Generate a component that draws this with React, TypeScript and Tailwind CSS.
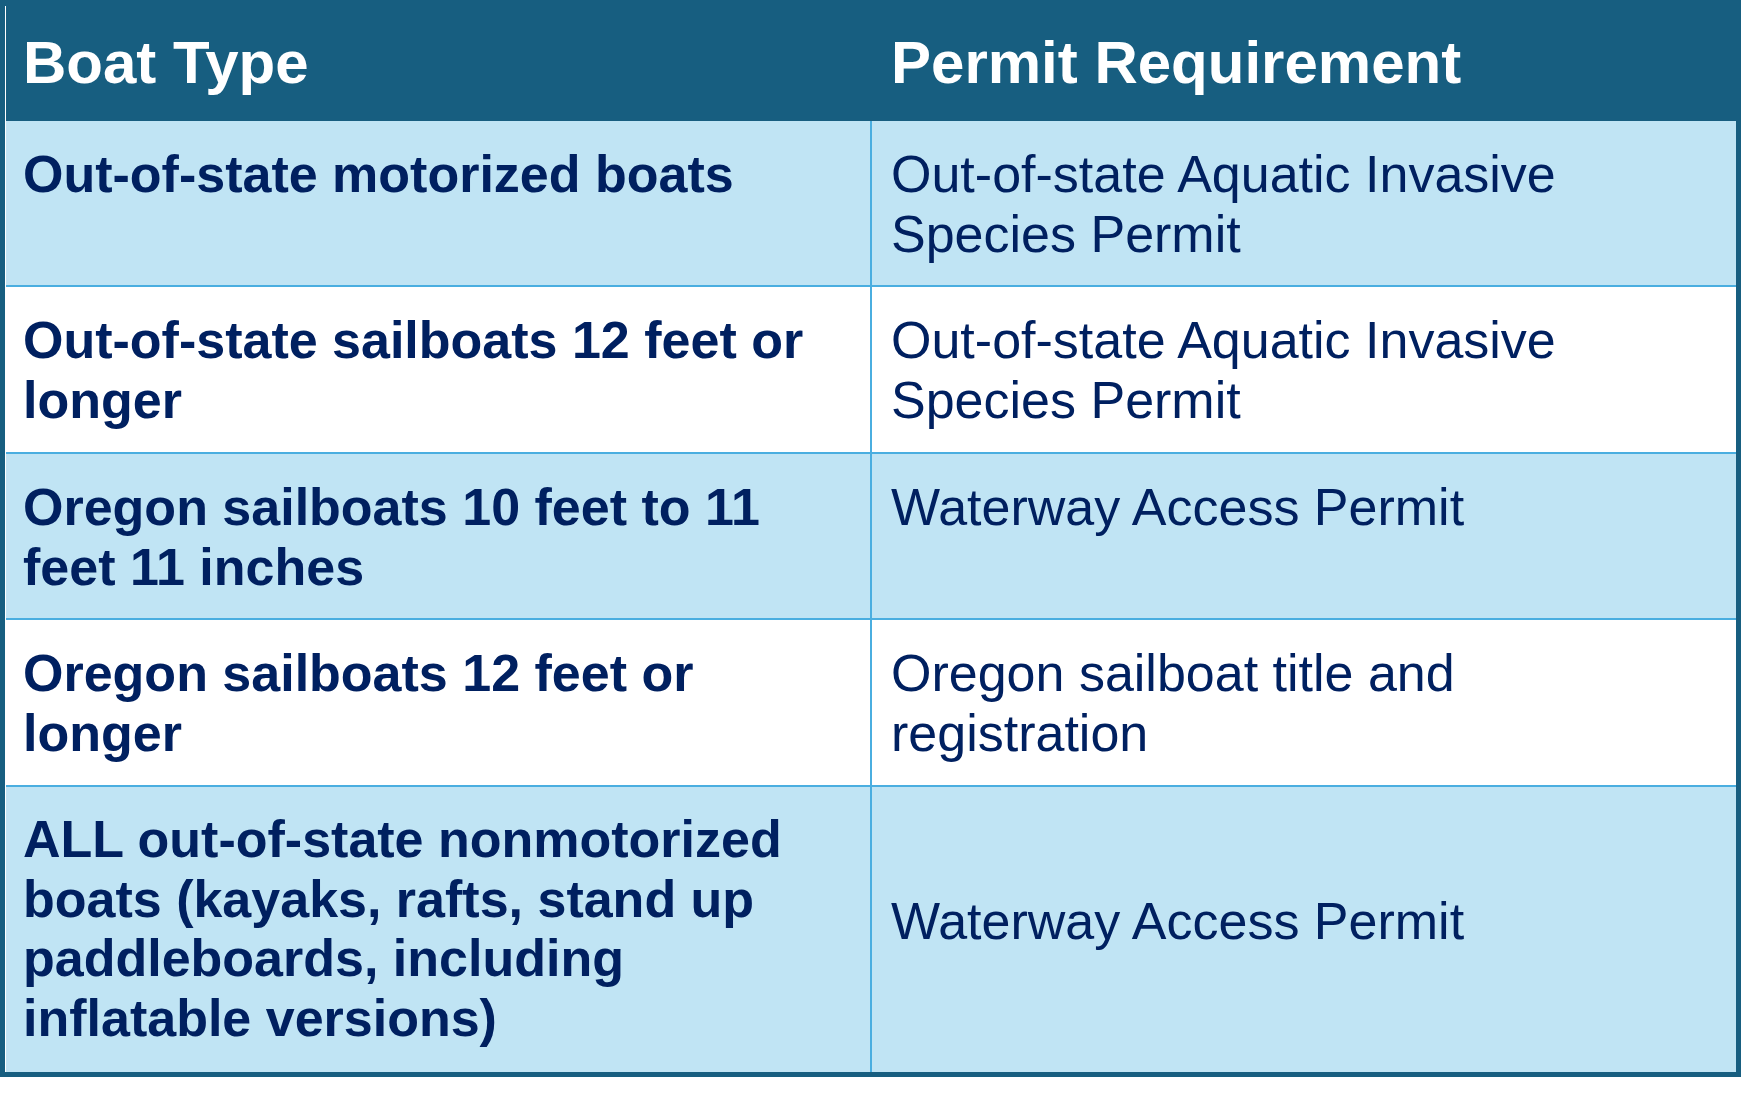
import React from 'react';

interface Row {
  boat: string[];
  permit: string[];
  tint: boolean;
  height: string;
}

const rows: Row[] = [
  { boat: ['Out-of-state motorized boats'], permit: ['Out-of-state Aquatic Invasive', 'Species Permit'], tint: true, height: 'h-[164px]' },
  { boat: ['Out-of-state sailboats 12 feet or', 'longer'], permit: ['Out-of-state Aquatic Invasive', 'Species Permit'], tint: false, height: 'h-[167px]' },
  { boat: ['Oregon sailboats 10 feet to 11', 'feet 11 inches'], permit: ['Waterway Access Permit'], tint: true, height: 'h-[166px]' },
  { boat: ['Oregon sailboats 12 feet or', 'longer'], permit: ['Oregon sailboat title and', 'registration'], tint: false, height: 'h-[167px]' },
];

const lastRow: Row = {
  boat: ['ALL out-of-state nonmotorized', 'boats (kayaks, rafts, stand up', 'paddleboards, including', 'inflatable versions)'],
  permit: ['Waterway Access Permit'],
  tint: true,
  height: 'h-[287px]',
};

const Lines: React.FC<{ lines: string[] }> = ({ lines }) => (
  <>
    {lines.map((l, i) => (
      <span key={i} className="block whitespace-nowrap">{l}</span>
    ))}
  </>
);

const App: React.FC = () => {
  return (
    <div className="w-[1746px] h-[1095px] bg-white font-['Liberation_Sans',Arial,sans-serif] text-[#002060]">
      <div className="w-[1741px] border-[#175e80] border-t-[6px] border-x-[5px] border-b-[5px]">
        <div className="border-l border-white flex flex-col">
          {/* header */}
          <div className="flex h-[115px] bg-[#175e80] text-white font-bold text-[60px] leading-[69px]">
            <div className="w-[864px] pl-[17px] pt-[22px]">Boat Type</div>
            <div className="flex-1 pl-[21px] pt-[22px]">Permit Requirement</div>
          </div>

          {rows.map((r, i) => (
            <div
              key={i}
              className={`flex ${r.height} text-[52px] leading-[59.5px] ${i > 0 ? 'border-t-2 border-[#4aaee0]' : ''} ${r.tint ? 'bg-[#c0e4f4]' : 'bg-white'}`}
            >
              <div className="w-[864px] pl-[17px] pt-[24px] font-bold">
                <Lines lines={r.boat} />
              </div>
              <div className="flex-1 border-l-2 border-[#4aaee0] pl-[19px] pt-[24px]">
                <Lines lines={r.permit} />
              </div>
            </div>
          ))}

          <div className={`flex ${lastRow.height} text-[52px] leading-[59.5px] border-t-2 border-[#4aaee0] bg-[#c0e4f4]`}>
            <div className="w-[864px] pl-[17px] pt-[23px] font-bold">
              <Lines lines={lastRow.boat} />
            </div>
            <div className="flex-1 flex items-center border-l-2 border-[#4aaee0] pl-[19px] pb-[15px]">
              <Lines lines={lastRow.permit} />
            </div>
          </div>
        </div>
      </div>
    </div>
  );
};

export default App;
